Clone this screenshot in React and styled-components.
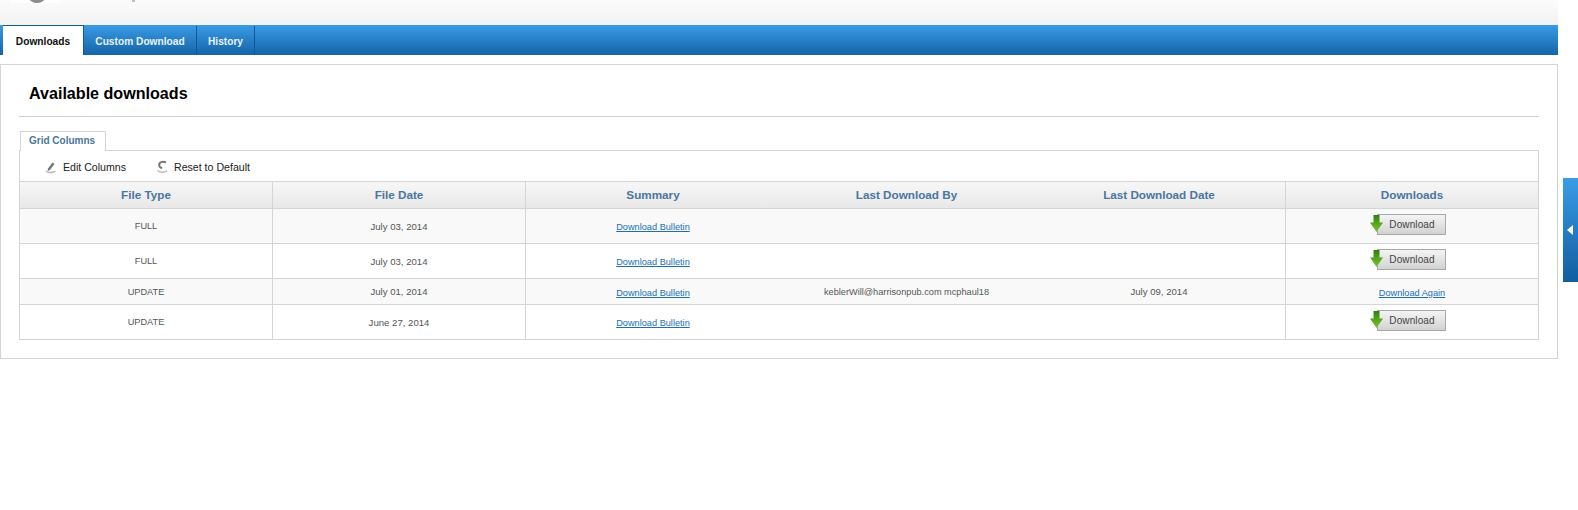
import React from "react"
import styled, { createGlobalStyle } from "styled-components"

const columns = ["File Type", "File Date", "Summary", "Last Download By", "Last Download Date", "Downloads"]

const rows = [
  { type: "FULL", date: "July 03, 2014", by: "", last: "", again: false },
  { type: "FULL", date: "July 03, 2014", by: "", last: "", again: false },
  { type: "UPDATE", date: "July 01, 2014", by: "keblerWill@harrisonpub.com mcphaul18", last: "July 09, 2014", again: true },
  { type: "UPDATE", date: "June 27, 2014", by: "", last: "", again: false },
]

const ArrowIcon = () => (
  <ArrowSvg viewBox="0 0 13 17">
    <defs>
      <linearGradient id="arrowFill" x1="0" y1="0" x2="0" y2="1">
        <stop offset="0" stopColor="#2f7f0c" />
        <stop offset="0.55" stopColor="#5aa81e" />
        <stop offset="1" stopColor="#7cc03a" />
      </linearGradient>
    </defs>
    <path d="M3.5 0h6v7.5h3.5l-6.5 9.5-6.5-9.5h3.5z" fill="url(#arrowFill)" />
  </ArrowSvg>
)

const PencilIcon = () => (
  <ToolSvg viewBox="0 0 12 14">
    <path d="M3 8.5l4.5-6 2 1.4-4.5 6-2.4 1z" fill="#777" />
    <path d="M1 11c2.5 2.2 7 2.2 9.5 0" fill="none" stroke="#bbb" strokeWidth="1.6" />
  </ToolSvg>
)

const ResetIcon = () => (
  <ToolSvg viewBox="0 0 12 14">
    <path d="M10 2.5C6.5 0.8 3 2.4 3.2 5.2c0.1 1.4 1.2 2.4 3 2.8" fill="none" stroke="#777" strokeWidth="2" />
    <path d="M1.5 10.5c2.5 2.4 7 2.4 9.5 0" fill="none" stroke="#bbb" strokeWidth="1.6" />
  </ToolSvg>
)

const App = () => {
  return (
    <Page>
      <GlobalStyle />
      <TopStrip>
        <LogoStub />
        <TitleStub />
      </TopStrip>
      <TabBar>
        <Tab active width="81px">Downloads</Tab>
        <Tab width="113px">Custom Download</Tab>
        <Tab width="58px">History</Tab>
      </TabBar>
      <Panel>
        <Heading>Available downloads</Heading>
        <SubTabRow>
          <SubTab>Grid Columns</SubTab>
        </SubTabRow>
        <GridBox>
          <Toolbar>
            <ToolButton>
              <PencilIcon />
              Edit Columns
            </ToolButton>
            <ToolButton>
              <ResetIcon />
              Reset to Default
            </ToolButton>
          </Toolbar>
          <HeaderRow>
            {columns.map((name, i) => (
              <HeaderCell key={name} $noBorder={i === 2 || i === 3}>
                {name}
              </HeaderCell>
            ))}
          </HeaderRow>
          {rows.map((row, i) => (
            <Row key={i} $odd={i % 2 === 0} $short={row.again}>
              <Cell>{row.type}</Cell>
              <Cell $wide>{row.date}</Cell>
              <Cell $noBorder>
                <LinkText>Download Bulletin</LinkText>
              </Cell>
              <Cell $noBorder>{row.by}</Cell>
              <Cell $wide>{row.last}</Cell>
              <Cell>
                {row.again ? (
                  <LinkText>Download Again</LinkText>
                ) : (
                  <DownloadButton>
                    <ArrowIcon />
                    Download
                  </DownloadButton>
                )}
              </Cell>
            </Row>
          ))}
        </GridBox>
      </Panel>
      <SideHandle>
        <HandleArrow />
      </SideHandle>
    </Page>
  )
}

/* STYLE */
const GlobalStyle = createGlobalStyle`
  html, body {
    margin: 0;
    background: #fff;
    font-family: "Liberation Sans", Arial, sans-serif;
  }
`

const Page = styled.div`
  position: relative;
  width: 1578px;
  height: 510px;
  overflow: hidden;
`

const TopStrip = styled.div`
  display: flex;
  height: 25px;
  width: 1558px;
  padding-left: 11px;
  box-sizing: border-box;
  background: linear-gradient(#fbfbfb, #f3f3f3);
  overflow: hidden;
`

const LogoStub = styled.div`
  width: 49px;
  height: 3px;
  background: #fff;
  position: relative;
  overflow: hidden;

  &::after {
    content: "";
    position: absolute;
    left: 12px;
    top: -38px;
    width: 28px;
    height: 41px;
    border-radius: 50%;
    background: #8c8c8c;
  }
`

const TitleStub = styled.div`
  width: 3px;
  height: 2px;
  margin-left: 72px;
  background: #bdbdbd;
`

const TabBar = styled.div`
  display: flex;
  align-items: flex-end;
  width: 1558px;
  height: 30px;
  padding-left: 3px;
  box-sizing: border-box;
  background: linear-gradient(#399be6, #1564a8);
`

const Tab = styled.div`
  width: ${({ width }) => width};
  height: ${({ active }) => (active ? "30px" : "29px")};
  display: flex;
  align-items: center;
  justify-content: center;
  box-sizing: border-box;
  padding-top: 2px;
  font-size: 10.2px;
  font-weight: bold;
  color: ${({ active }) => (active ? "#111" : "#e8f2fa")};
  background: ${({ active }) => (active ? "#fff" : "transparent")};
  border-right: 1px solid #14588f;
  border-top: ${({ active }) => (active ? "1px solid #14588f" : "0")};
`

const Panel = styled.div`
  width: 1558px;
  height: 295px;
  margin-top: 9px;
  box-sizing: border-box;
  border: 1px solid #d4d4d4;
  padding: 0 18px;
`

const Heading = styled.h1`
  margin: 0;
  height: 52px;
  padding: 18px 0 0 10px;
  box-sizing: border-box;
  font-size: 16.1px;
  line-height: 20px;
  font-weight: bold;
  color: #000;
  border-bottom: 1px solid #cfcfcf;
`

const SubTabRow = styled.div`
  display: flex;
  margin-top: 14px;
  padding-left: 1px;
`

const SubTab = styled.div`
  height: 20px;
  padding: 0 10px 0 8px;
  box-sizing: border-box;
  font-size: 10px;
  line-height: 18px;
  font-weight: bold;
  color: #4a76a0;
  background: #fff;
  border: 1px solid #d4d4d4;
  border-bottom: 0;
  margin-bottom: -1px;
  position: relative;
`

const GridBox = styled.div`
  width: 1520px;
  box-sizing: border-box;
  border: 1px solid #d4d4d4;
`

const Toolbar = styled.div`
  display: flex;
  align-items: center;
  gap: 30px;
  height: 30px;
  padding: 2px 0 0 25px;
  box-sizing: border-box;
`

const ToolButton = styled.div`
  display: flex;
  align-items: center;
  gap: 6px;
  font-size: 10.6px;
  color: #222;
`

const ToolSvg = styled.svg`
  width: 12px;
  height: 14px;
  flex: none;
`

const gridColumns = "253px 253px 254px 253px 253px 252px"

const HeaderRow = styled.div`
  display: grid;
  grid-template-columns: ${gridColumns};
  height: 28px;
  box-sizing: border-box;
  border-top: 1px solid #d4d4d4;
  border-bottom: 1px solid #d4d4d4;
  background: linear-gradient(#f7f7f7, #e8e8e8);
`

const HeaderCell = styled.div`
  display: flex;
  align-items: center;
  justify-content: center;
  padding-bottom: 2px;
  box-sizing: border-box;
  font-size: 11.7px;
  font-weight: bold;
  color: #4a76a0;
  border-right: ${({ $noBorder }) => ($noBorder ? "0" : "1px solid #d4d4d4")};

  &:last-child {
    border-right: 0;
  }
`

const Row = styled.div`
  display: grid;
  grid-template-columns: ${gridColumns};
  height: ${({ $short }) => ($short ? "26px" : "35px")};
  box-sizing: border-box;
  background: ${({ $odd }) => ($odd ? "#f9f9f9" : "#fff")};
  border-bottom: 1px solid #d4d4d4;

  &:last-child {
    height: 34px;
    border-bottom: 0;
  }
`

const Cell = styled.div`
  display: flex;
  align-items: center;
  justify-content: center;
  font-size: ${({ $wide }) => ($wide ? "9.6px" : "9.2px")};
  color: #555;
  border-right: ${({ $noBorder }) => ($noBorder ? "0" : "1px solid #d4d4d4")};

  &:last-child {
    border-right: 0;
  }
`

const LinkText = styled.span`
  color: #1c6fb4;
  text-decoration: underline;
  position: relative;
  top: 1px;
`

const DownloadButton = styled.div`
  position: relative;
  top: -2px;
  left: -1px;
  display: flex;
  align-items: center;
  justify-content: center;
  width: 69px;
  height: 21px;
  padding: 1px 0 0 2px;
  box-sizing: border-box;
  font-size: 10px;
  letter-spacing: 0.1px;
  color: #444;
  background: linear-gradient(#f4f4f4, #d2d2d2);
  border: 1px solid #a8a8a8;
`

const ArrowSvg = styled.svg`
  position: absolute;
  left: -8px;
  top: 0;
  width: 13px;
  height: 17px;
`

const SideHandle = styled.div`
  position: absolute;
  right: 0;
  top: 178px;
  width: 15px;
  height: 104px;
  display: flex;
  align-items: center;
  padding-left: 4px;
  box-sizing: border-box;
  background: linear-gradient(#3a9ce6, #115da0);
`

const HandleArrow = styled.div`
  width: 0;
  height: 0;
  border-top: 5px solid transparent;
  border-bottom: 5px solid transparent;
  border-right: 6px solid #fff;
`

export default App
